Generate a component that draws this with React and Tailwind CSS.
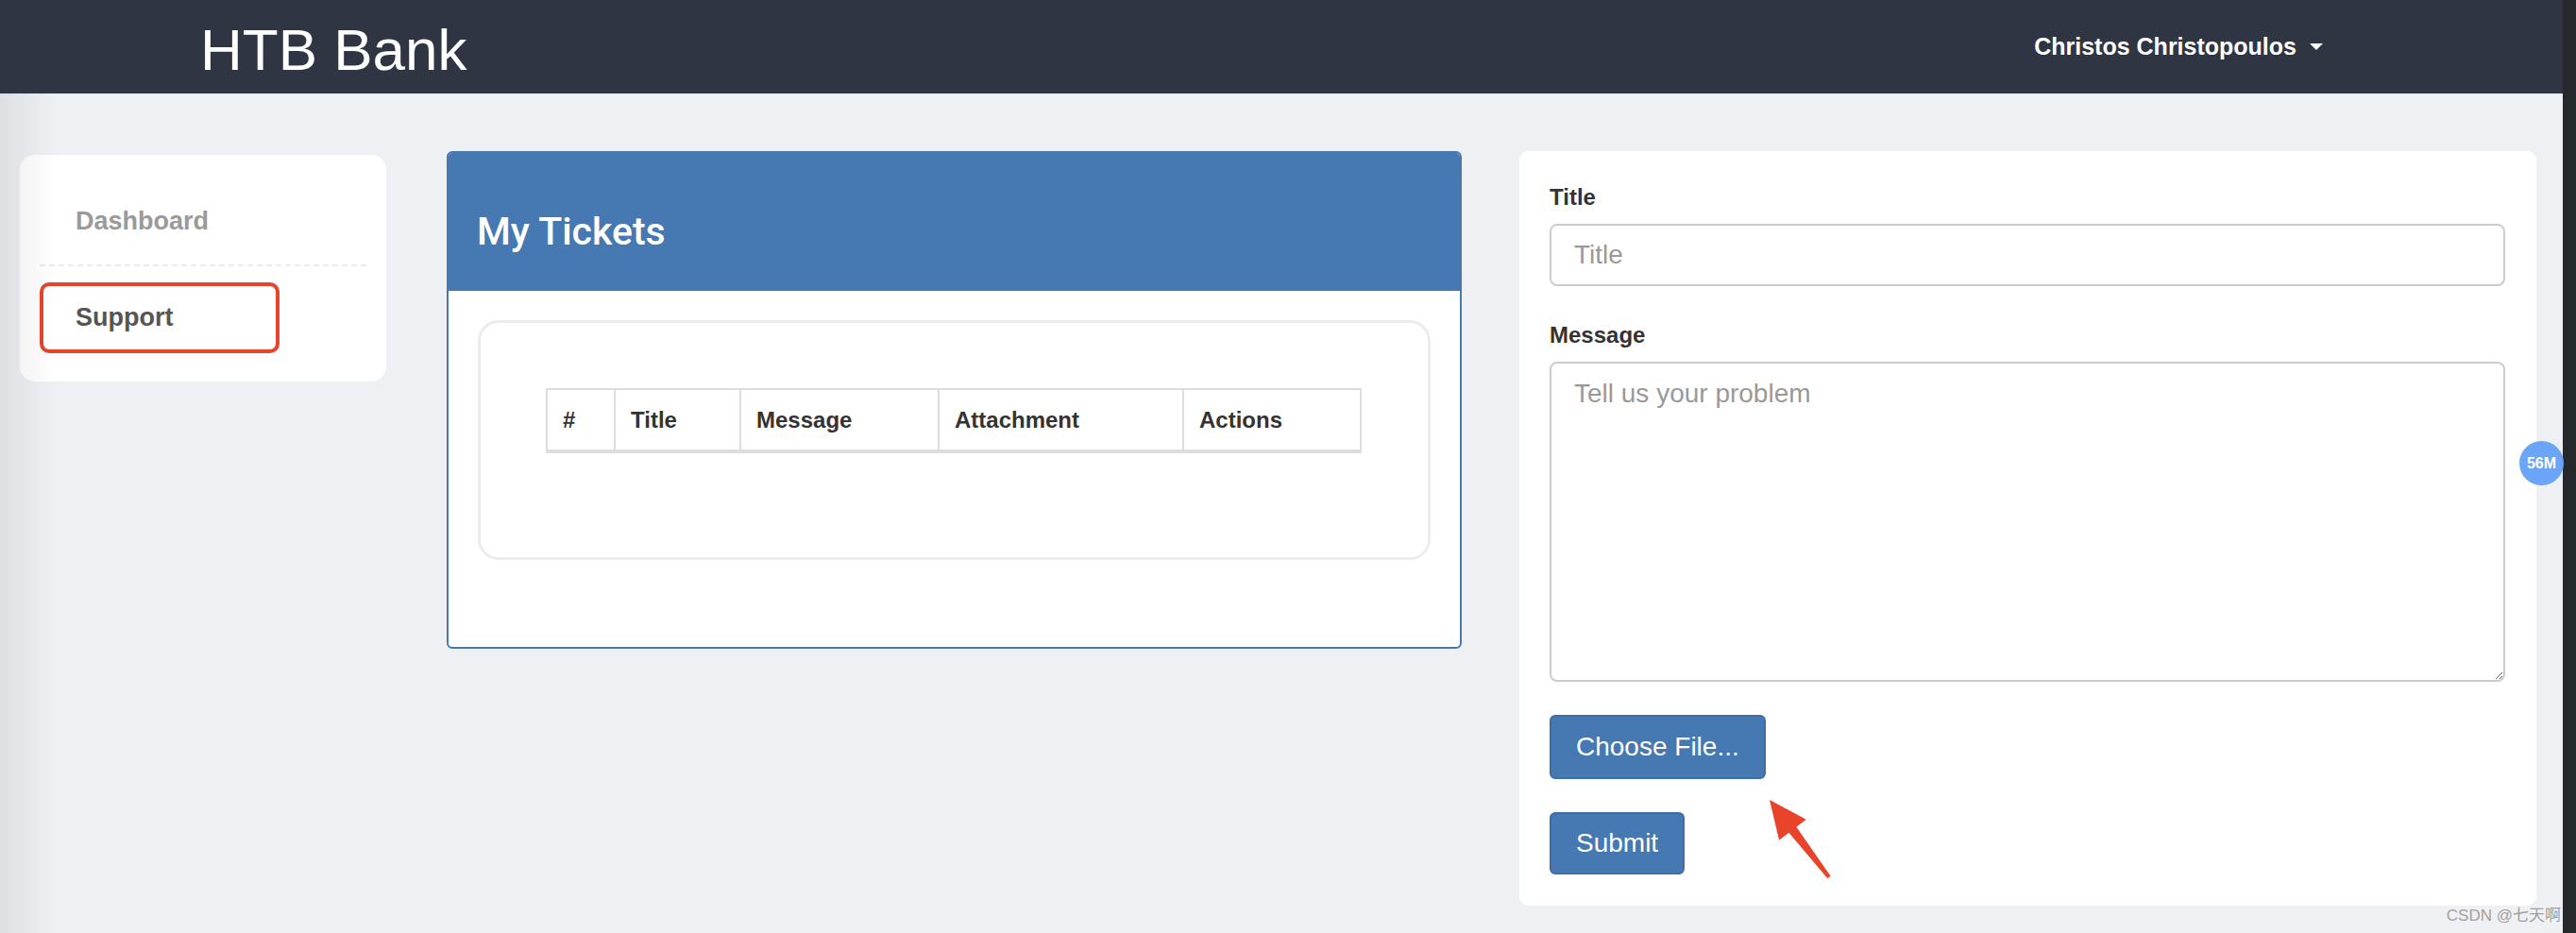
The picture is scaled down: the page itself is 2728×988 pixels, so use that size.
import React from 'react';

const columns = [
    { label: '#', w: 'w-[72px]' },
    { label: 'Title', w: 'w-[133px]' },
    { label: 'Message', w: 'w-[210px]' },
    { label: 'Attachment', w: 'w-[259px]' },
    { label: 'Actions', w: 'w-[186px]' },
];

const App = () => {
    return (
        <div className="relative w-[2728px] h-[988px] flex overflow-hidden bg-[#eff0f4] font-['Liberation_Sans','Helvetica',sans-serif]">
            <div className="flex-1 flex flex-col">
                {/* top bar */}
                <nav className="h-[99px] bg-[#2f3542] flex items-center justify-between pl-[212px] pr-[254px]">
                    <span className="text-white text-[62px] leading-none pt-[6px]">HTB Bank</span>
                    <span className="flex items-center text-white text-[25px] font-bold">
                        Christos Christopoulos
                        <span className="ml-[14px] w-0 h-0 border-l-[7px] border-r-[7px] border-t-[7px] border-l-transparent border-r-transparent border-t-white"></span>
                    </span>
                </nav>

                <div className="relative flex-1 flex items-start pl-[21px] pt-[61px]">
                    <div className="pointer-events-none absolute left-0 top-0 bottom-0 w-[60px] bg-gradient-to-r from-black/[0.07] to-transparent"></div>

                    {/* sidebar */}
                    <div className="mt-[4px] w-[388px] h-[240px] rounded-[16px] bg-white px-[21px] pt-[24px]">
                        <div className="h-[94px] flex items-center pl-[38px] border-b-2 border-dashed border-[#ebebeb] text-[27px] font-semibold text-[#9a9a9a]">
                            Dashboard
                        </div>
                        <div className="mt-[17px] w-[254px] h-[75px] flex items-center pl-[34px] border-[4px] border-[#e8432b] rounded-[10px] text-[27px] font-semibold text-[#555]">
                            Support
                        </div>
                    </div>

                    {/* tickets */}
                    <div className="ml-[64px] w-[1075px] h-[527px] rounded-[6px] border-2 border-[#4679b2] bg-white overflow-hidden">
                        <div className="h-[146px] bg-[#4679b2] flex items-center pl-[30px] pt-[20px]">
                            <h2 className="text-white text-[41px] font-medium leading-none font-['Roboto',sans-serif]">My Tickets</h2>
                        </div>
                        <div className="pl-[31px] pt-[31px]">
                            <div className="w-[1009px] h-[254px] border-[3px] border-[#ececec] rounded-[22px] pl-[69px] pt-[69px]">
                                <div className="w-[864px] flex border-2 border-b-4 border-[#dddddd]">
                                    {columns.map((c, i) => (
                                        <div key={c.label} className={`${c.w} h-[63px] flex items-center pl-[16px] text-[24px] font-bold text-[#333] ${i < columns.length - 1 ? 'border-r-2 border-[#dddddd]' : ''}`}>
                                            {c.label}
                                        </div>
                                    ))}
                                </div>
                            </div>
                        </div>
                    </div>

                    {/* new ticket form */}
                    <form className="ml-[61px] w-[1077px] h-[799px] rounded-[10px] bg-white px-[32px] pt-[32px]">
                        <label className="block text-[24px] leading-[34px] font-bold text-[#333] mb-[11px]">Title</label>
                        <input
                            type="text"
                            placeholder="Title"
                            className="block w-[1012px] h-[66px] border-2 border-[#cccccc] rounded-[8px] px-[24px] text-[28px] text-[#555] placeholder:text-[#999] outline-none"
                        />
                        <label className="block mt-[35px] text-[24px] leading-[34px] font-bold text-[#333] mb-[11px]">Message</label>
                        <textarea
                            placeholder="Tell us your problem"
                            className="block w-[1012px] h-[339px] border-2 border-[#cccccc] rounded-[8px] px-[24px] py-[12px] text-[28px] leading-[40px] text-[#555] placeholder:text-[#999] outline-none"
                        ></textarea>
                        <button type="button" className="block mt-[35px] h-[68px] px-[26px] rounded-[6px] border-2 border-[#3f6ea6] bg-[#4679b2] text-white text-[28px]">
                            Choose File...
                        </button>
                        <button type="submit" className="block mt-[35px] h-[66px] px-[26px] rounded-[6px] border-2 border-[#3f6ea6] bg-[#4679b2] text-white text-[28px]">
                            Submit
                        </button>
                    </form>
                </div>
            </div>
            <div className="w-[14px] bg-[#25292c]"></div>

            {/* annotation arrow */}
            <svg className="pointer-events-none absolute left-0 top-0" width="2728" height="988">
                <polygon
                    points="1874,847 1912.7,867.7 1902.4,875.7 1938.6,927.8 1935.4,930.2 1894.4,881.7 1884.1,889.7"
                    fill="#e8432b"
                />
            </svg>

            {/* floating badge */}
            <div className="absolute left-[2668px] top-[467px] w-[47px] h-[47px] rounded-full bg-[#6aa5f8] flex items-center justify-center text-white text-[16px] font-bold">
                56M
            </div>

            <div className="absolute right-[16px] bottom-[6px] text-[17px] text-[#a0a0a0] font-['Liberation_Sans','Noto_Sans_CJK_SC',sans-serif]">
                CSDN @七天啊
            </div>
        </div>
    );
};

export default App;
